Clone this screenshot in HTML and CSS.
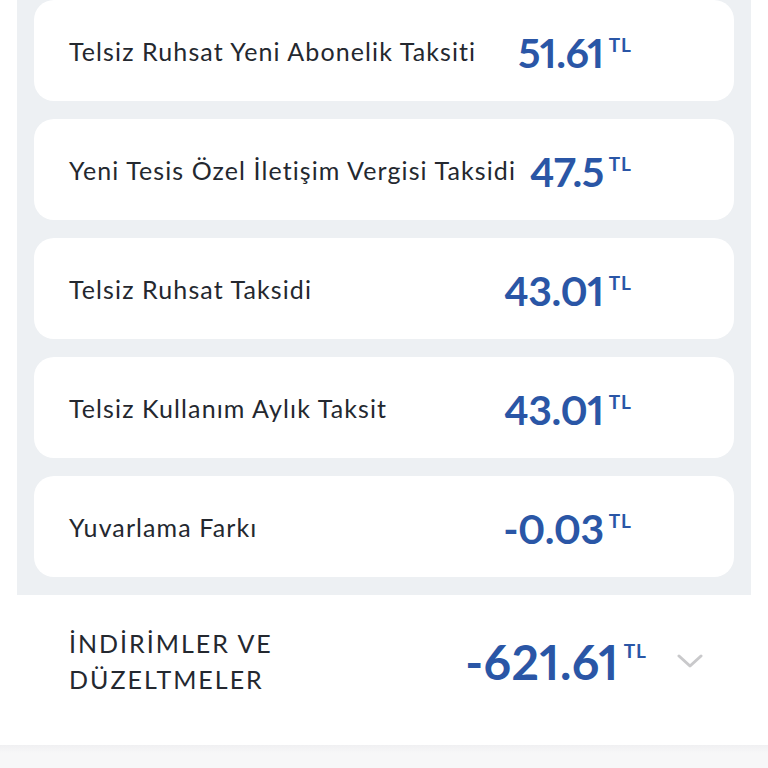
FILE: index.html
```html
<!DOCTYPE html>
<html lang="tr">
<head>
    <meta charset="UTF-8">
    <meta name="viewport" content="width=device-width, initial-scale=1.0">
    <title>Fatura Detayı</title>
    <link rel="stylesheet" href="styles.css">
</head>
<body>
    <!-- taksit listesi -->
    <div class="detail-panel">
        <div class="fee-card">
            <span class="fee-name">Telsiz Ruhsat Yeni Abonelik Taksiti</span>
            <span class="fee-amount">51.61<sup class="currency">TL</sup></span>
        </div>
        <div class="fee-card">
            <span class="fee-name">Yeni Tesis Özel İletişim Vergisi Taksidi</span>
            <span class="fee-amount">47.5<sup class="currency">TL</sup></span>
        </div>
        <div class="fee-card">
            <span class="fee-name">Telsiz Ruhsat Taksidi</span>
            <span class="fee-amount">43.01<sup class="currency">TL</sup></span>
        </div>
        <div class="fee-card">
            <span class="fee-name">Telsiz Kullanım Aylık Taksit</span>
            <span class="fee-amount">43.01<sup class="currency">TL</sup></span>
        </div>
        <div class="fee-card">
            <span class="fee-name">Yuvarlama Farkı</span>
            <span class="fee-amount">-0.03<sup class="currency">TL</sup></span>
        </div>
    </div>

    <!-- indirimler satırı -->
    <div class="summary-row">
        <span class="summary-name">İNDİRİMLER VE<br>DÜZELTMELER</span>
        <span class="summary-amount">-621.61<sup class="currency">TL</sup></span>
        <svg class="chevron" width="26" height="16" viewBox="0 0 26 16">
            <path d="M2 3 L13 13 L24 3" fill="none" stroke="#c9c9cb" stroke-width="3" stroke-linecap="round" stroke-linejoin="round"/>
        </svg>
    </div>

    <div class="bottom-bar"></div>
</body>
</html>
```

FILE: styles.css
```css
/* temel */
body {
    margin: 0;
    background-color: #fff;
    font-family: Lato, "Noto Sans", sans-serif;
    color: #24282f;
}
* {
    box-sizing: border-box;
}

/* gri liste alanı */
.detail-panel {
    margin: 0 17px;
    background-color: #edf0f3;
    padding: 0 17px 18px 17px;
    display: flex;
    flex-direction: column;
    gap: 18px;
}
.fee-card {
    background-color: #fff;
    border-radius: 20px;
    height: 101px;
    padding: 0 102px 0 35px;
    display: flex;
    align-items: center;
}
.fee-name {
    flex-grow: 1;
    font-size: 25px;
    letter-spacing: 1.1px;
}
.fee-amount {
    font-size: 41px;
    font-weight: 700;
    font-variant-numeric: proportional-nums;
    letter-spacing: -0.5px;
    color: #2a56a6;
    white-space: nowrap;
    margin-left: 8px;
    padding-top: 4px;
}
.currency {
    font-size: 19px;
    font-weight: 700;
    letter-spacing: 1px;
    vertical-align: 0;
    position: relative;
    top: -16px;
    margin-left: 5px;
}

/* indirimler */
.summary-row {
    display: flex;
    align-items: center;
    padding: 30px 65px 48px 69px;
}
.summary-name {
    flex-grow: 1;
    font-size: 25px;
    line-height: 36px;
    letter-spacing: 2px;
}
.summary-amount {
    font-size: 48px;
    font-weight: 700;
    font-variant-numeric: proportional-nums;
    letter-spacing: 0.5px;
    color: #2a56a6;
    white-space: nowrap;
}
.summary-amount .currency {
    top: -22px;
    margin-left: 5px;
}
.chevron {
    margin-left: 30px;
}

.bottom-bar {
    height: 30px;
    background: linear-gradient(#f0f0f2, #f7f7f8 8px);
}
```
